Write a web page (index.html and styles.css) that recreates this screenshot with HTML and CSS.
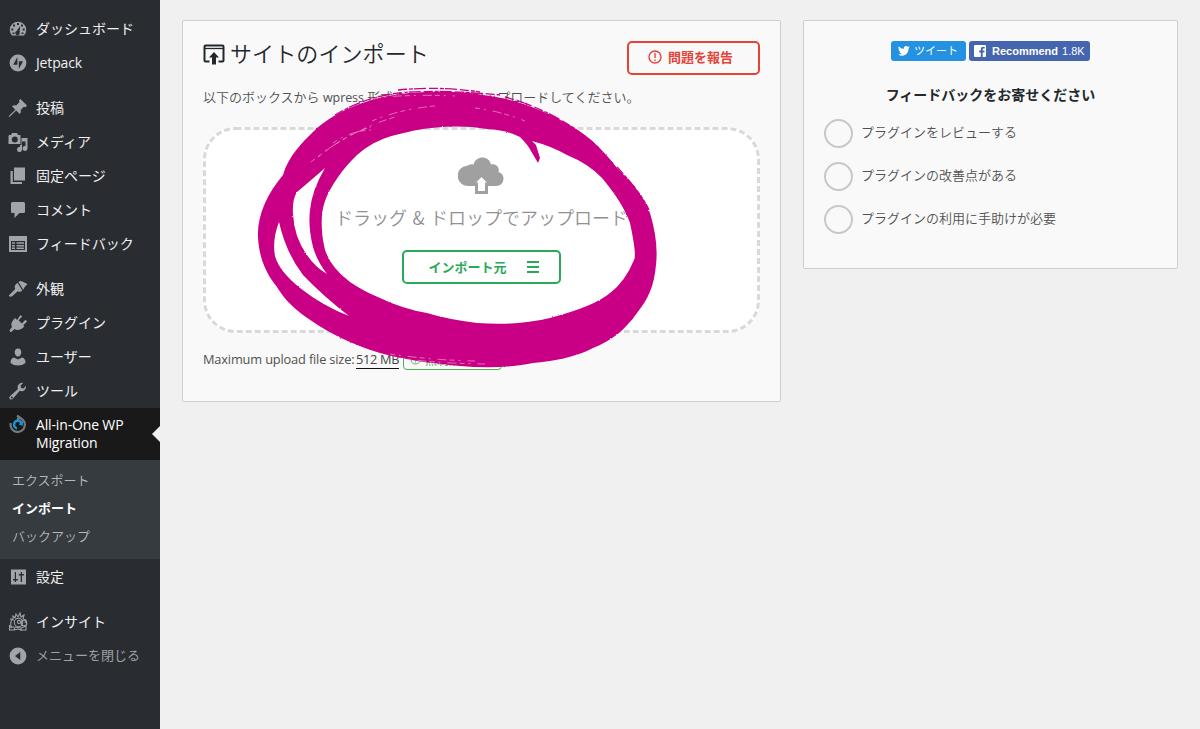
FILE: index.html
```html
<!DOCTYPE html>
<html lang="ja">
<head>
<meta charset="utf-8">
<title>サイトのインポート</title>
<link rel="stylesheet" href="styles.css">
</head>
<body>
<div class="app">
  <nav class="sidebar">
    <ul class="menu">
      <li class="item"><svg class="icon" viewBox="0 0 20 20"><path fill-rule="evenodd" d="M4 16.500A8.200 8.200 0 1 1 16 16.500ZM9 4v2h2V4ZM5 5.500v2h2v-2ZM13 5.500v2h2v-2ZM3.300 9.500v2h2v-2ZM14.700 9.500v2h2v-2ZM12.200 7 8.600 12a2.200 2.200 0 1 0 3 1.200ZM4.500 13.500v1.500h2v-1.500ZM13.500 13.500v1.500h2v-1.500Z"/></svg><span>ダッシュボード</span></li>
      <li class="item latin"><svg class="icon" viewBox="0 0 20 20"><path fill-rule="evenodd" d="M10 1.600a8.400 8.400 0 1 0 0 16.800 8.400 8.400 0 0 0 0-16.800ZM9.400 4v7.700H5.200ZM10.800 16V8.300H15Z"/></svg><span>Jetpack</span></li>
      <li class="item gap"><svg class="icon" viewBox="0 0 20 20"><path d="M12.500 1 19 7.500 17.600 9.200 15.900 8.700 12.600 12C13.300 13.600 12.800 15.200 11.700 16L8.200 12.600 2.200 18.300.6 19.200 1.300 17.500 7.300 11.700 4 8.300C5 7.200 6.700 6.900 8.100 7.500L11.400 4.200 10.900 2.600Z"/></svg><span>投稿</span></li>
      <li class="item"><svg class="icon" viewBox="0 0 20 20"><path fill-rule="evenodd" d="M1 3h2l1-2h5l1 2h2.500v9H.5V4Zm5.800 1.500a3 3 0 1 0 0 6 3 3 0 0 0 0-6ZM13.500 6H19.500v10.500a2.500 2.500 0 1 1-2-2.400V9.500H14v8a2.500 2.500 0 1 1-2-2.400V13h1.500Z"/></svg><span>メディア</span></li>
      <li class="item"><svg class="icon" viewBox="0 0 20 20"><path d="M6 1.500h11v13H6ZM2.500 5H4.800v11H14v2H2.500Z"/></svg><span>固定ページ</span></li>
      <li class="item"><svg class="icon" viewBox="0 0 20 20"><path d="M4.500 2h11Q17 2 17 3.500v8q0 1.500-1.500 1.500H11.500L6.500 18V13h-2Q3 13 3 11.500v-8Q3 2 4.500 2Z"/></svg><span>コメント</span></li>
      <li class="item"><svg class="icon" viewBox="0 0 20 20"><path fill-rule="evenodd" d="M1 2h18v16H1ZM3 7v9h14V7ZM4 8.300h3v1.500H4ZM8.500 8.300H16v1.500H8.500ZM4 11h3v1.500H4ZM8.500 11H16v1.500H8.500ZM4 13.600h3V15H4ZM8.500 13.600H16V15H8.500Z"/></svg><span>フィードバック</span></li>
      <li class="item gap"><svg class="icon" viewBox="0 0 20 20"><path d="M10.500 3Q12.500 1 14.300 2.600L19.500 5Q17 7.200 15.200 10.800ZM9.500 3.800 14.300 11.600Q12 13.800 9.700 12.200L4.500 17Q2 18.700.8 16.500L7.200 10Q5.500 6.500 9.500 3.800Z"/></svg><span>外観</span></li>
      <li class="item"><svg class="icon" viewBox="0 0 20 20"><path d="m12.500 1.900 1.700 1.700-3.600 3.600 3.200 3.200 3.600-3.600 1.700 1.700-3.800 3.800 1.100 1.100-1.200 1.200c-2 2-6 3.500-8.700 1.500L3.600 18.700Q1.900 19.600 1.500 17.300L4 14C2.500 11 4 8.300 6 6.200L7.100 5l2 1.900Z"/></svg><span>プラグイン</span></li>
      <li class="item"><svg class="icon" viewBox="0 0 20 20"><path d="M10 1.500c2.100 0 3.300 1.600 3.300 3.700S12 9.500 10 9.500 6.700 7.300 6.700 5.200 7.900 1.500 10 1.500ZM6 10.500l4 2 4-2q3.500.5 3.500 5.500-3 2.500-7.500 2.500T2.500 16q0-5 3.500-5.500Z"/></svg><span>ユーザー</span></li>
      <li class="item"><svg class="icon" viewBox="0 0 20 20"><path fill-rule="evenodd" d="M16.700 8.900C15.400 10.200 13.400 10.500 11.800 9.800L5 17.600Q3.300 19.200 1.800 17.900T2.200 15L10 8.100C9.300 6.500 9.600 4.600 10.900 3.300A5 5 0 0 1 15.100 1.900L12.600 4.500 13 7l2.500.4L18.100 4.800A5 5 0 0 1 16.700 8.900ZM3.800 15.400a1 1 0 1 0 0 2 1 1 0 0 0 0-2Z"/></svg><span>ツール</span></li>
      <li class="item current latin"><svg class="icon" viewBox="0 0 20 20"><path class="ring" d="M9.500 2.600A7.200 7.200 0 1 1 2.700 8"/><path class="ring" d="M9 .5 12 2.700 9 5"/><path class="swirl" d="M13.800 8.500A4 4 0 1 0 9 13.500"/><path class="swirl-tip" d="m15 6-.3 5-4.200-1.800Z"/></svg><span>All-in-One WP<br>Migration</span></li>
    </ul>
    <ul class="submenu"><li>エクスポート</li><li class="selected">インポート</li><li>バックアップ</li></ul>
    <ul class="menu">
      <li class="item"><svg class="icon" viewBox="0 0 20 20"><path fill-rule="evenodd" d="M3 2.500h15v15H3ZM6.800 5v7H5v1.500H6.800V15H8v-1.500h1.800V12H8V5ZM12.700 5v2h-1.900v1.500h1.900V15H14V8.500h1.900V7H14V5Z"/></svg><span>設定</span></li>
      <li class="item gap"><svg class="icon outline" viewBox="0 0 20 20"><path d="M4 16C1 13 4 10 3 7l2 1V4l2 2 1-4 2 3 2-4 1 4 3-2-1 4 3 1-1 3"/><circle cx="10.500" cy="10.500" r="4.200"/><circle cx="16" cy="11" r="2.800"/><circle cx="11" cy="10" r="1.600"/><path d="M1.500 13v5H6l1-3 6 1 5-2v4h-5l-3-1-4 1M2 15h4M13 16v3"/></svg><span>インサイト</span></li>
      <li class="item collapse"><svg class="icon" viewBox="0 0 20 20"><path fill-rule="evenodd" d="M10 1.600a8.400 8.400 0 1 0 0 16.800 8.400 8.400 0 0 0 0-16.800ZM12.300 6v8L7 10Z"/></svg><span>メニューを閉じる</span></li>
    </ul>
  </nav>
  <main class="content">
    <section class="card import">
      <header class="head">
        <h1><svg class="title-icon" viewBox="0 0 22 21"><path d="M6.500 17.500H2.500q-1 0-1-1v-14q0-1 1-1h17q1 0 1 1v14q0 1-1 1H15.500" fill="none" stroke="currentColor" stroke-width="2"/><path d="M2 4.500h18" fill="none" stroke="currentColor" stroke-width="1.300"/><path d="M11 8 16 13.500H13v7H9v-7H6Z"/></svg><span>サイトのインポート</span></h1>
        <div class="btn report"><svg viewBox="0 0 14 14"><circle cx="7" cy="7" r="6"/><path d="M7 3v5M7 9.500v1.500"/></svg><span>問題を報告</span></div>
      </header>
      <p class="lead">以下のボックスから <span class="wp">wpress</span> 形式のファイルをアップロードしてください。</p>
      <div class="drop">
        <svg class="dash" viewBox="0 0 557 206"><rect x="1.500" y="1.500" width="554" height="203" rx="31"/></svg>
        <svg class="cloud" viewBox="0 0 47 38"><path d="M11 29A10.200 10.200 0 1 1 9 8.700Q12 6.500 15.500 7.500C18-2 31-2 33 7.500c5-1 9 3 7.500 7.500A7.200 7.200 0 0 1 39 29Z"/><path class="arrow" d="M23.500 18 32.500 27H28.500v8.500H18.500V27H14.500Z"/></svg>
        <div class="drop-text">ドラッグ &amp; ドロップでアップロード</div>
        <div class="btn source"><span>インポート元</span><svg viewBox="0 0 12 12"><path d="M0 1h12M0 6h12M0 11h12"/></svg></div>
      </div>
      <div class="limit"><span class="max">Maximum upload file size:</span><span class="size">512 MB</span><span class="unlimited"><svg viewBox="0 0 12 12"><circle cx="6" cy="6" r="5"/><path d="M6 3v4M6 8v1.500"/></svg>無制限の入手</span></div>
      <svg class="brush" viewBox="250 80 420 300">
        <defs><filter id="rough" x="-5%" y="-5%" width="110%" height="110%"><feTurbulence type="fractalNoise" baseFrequency=".5" numOctaves="2" seed="4"/><feDisplacementMap in="SourceGraphic" scale="2" xChannelSelector="R" yChannelSelector="G"/></filter></defs>
        <g filter="url(#rough)">
        <path class="paint" fill-rule="evenodd" d="M258 237C257 216 267 194 283 175C289 155 302 143 313 132C332 113 361 102 383 97C410 91 458 90 483 95C518 99 548 112 573 127C591 138 605 152 617 168C630 181 643 194 650 213C655 230 658 247 656 265C654 287 648 299 637 313C624 331 611 341 593 348C574 358 553 361 533 363C507 368 484 368 460 366C432 363 409 361 380 353C350 344 325 331 303 315C291 306 283 297 277 287C264 271 259 255 258 237Z
        M323 240C321 225 321 212 325 201C330 187 343 168 357 155C376 139 389 136 417 130C439 126 465 125 487 129Q507 130 520 137Q528 145 531 151L538 163L540 158L536 145L532 141Q551 146 567 155Q589 164 602 178Q623 203 630 223Q637 256 634 260Q625 282 610 293Q595 306 550 318Q517 326 477 323Q446 319 427 313Q403 309 380 298Q363 291 350 282Q331 268 325 250Z
        M325 168Q309 182 297 192Q292 200 293 214Q294 237 307 255Q315 267 327 274Q317 261 313 247Q308 227 310 210Q312 190 325 168Z
        M279 222Q272 240 275 256Q279 271 300 288Q323 306 349 316Q323 296 303 275Q286 253 279 222Z"/>
        <g class="fringe"><path d="M285 172Q301 135 345 111"/><path d="M335 115Q370 94 410 92T500 95"/><path d="M398 90Q440 86 480 92"/><path d="M505 97Q560 112 600 149"/><path d="M617 167Q642 194 649 210"/></g>
        <g class="bristle"><path d="M311 162Q350 130 398 116"/><path d="M318 157Q345 135 371 127"/><path d="M333 143Q350 131 371 130"/><path d="M372 121Q400 109 435 106"/><path d="M475 108Q500 111 525 121"/><path d="M390 354Q430 360 475 361"/><path d="M400 358Q430 363 485 364"/><path d="M375 98Q410 94 455 96"/></g>
        </g>
      </svg>
    </section>
    <aside class="card feedback">
      <div class="social"><div class="tweet"><svg viewBox="0 0 24 20"><path d="M23.500 2.400q-1.200.6-2.700.8 1.500-1 2.100-2.600-1.400.8-3 1.200A4.800 4.800 0 0 0 11.600 6Q5.900 5.800 1.700.9A4.800 4.800 0 0 0 3.200 7.300Q2 7.200 1 6.600 1 10.500 4.900 11.500 4 11.800 2.700 11.600 3.600 14.600 7.200 15 4.200 17.300.2 17C11 23.500 21.300 16.500 21.100 4.900Q22.500 3.900 23.500 2.400Z"/></svg><span>ツイート</span></div><div class="recommend"><svg viewBox="0 0 12 12"><path fill-rule="evenodd" d="M1 0h10q1 0 1 1v10q0 1-1 1H8.700V7.400h1.600l.3-1.800H8.700V4.400q0-.9 1-.9h1V1.900Q6.800 1.200 6.800 4.100v1.500H5.200v1.800h1.600V12H1q-1 0-1-1V1q0-1 1-1Z"/></svg><b>Recommend</b><span>1.8K</span></div></div>
      <h2>フィードバックをお寄せください</h2>
      <ul class="choices"><li><i></i><span>プラグインをレビューする</span></li><li><i></i><span>プラグインの改善点がある</span></li><li><i></i><span>プラグインの利用に手助けが必要</span></li></ul>
    </aside>
  </main>
</div>
</body>
</html>
```
FILE: styles.css
```css
* { box-sizing: border-box; }
body { margin: 0; background: #f0f0f0; font-family: "Open Sans", "Noto Sans CJK JP", sans-serif; font-size: 13px; color: #505050; }
ul { list-style: none; margin: 0; padding: 0; }
svg { display: block; flex: none; }
.app { display: flex; height: 729px; overflow: hidden; }
.sidebar { width: 160px; flex: none; background: #292c31; padding-top: 11px; }
.item { display: flex; align-items: center; height: 34px; color: #f0f0f0; font: 14px/18px "Noto Sans CJK JP", sans-serif; }
.item span { margin-top: -1px; }
.item.gap { margin-top: 11px; }
.item.latin { font-family: "Open Sans", sans-serif; font-size: 14px; letter-spacing: -.15px; }
.item.latin span { margin-top: 1px; }
.item .icon { width: 20px; height: 20px; margin: 1px 8px 0; fill: #a0a5aa; }
.item .outline { fill: none; stroke: #a0a5aa; stroke-width: 1.1; }
.item.current { position: relative; height: 52px; margin-top: 1px; background: #191919; color: #fff; align-items: flex-start; padding-top: 8px; }
.item.current span { margin-top: 0; }
.item.current .icon { margin-top: -1px; }
.item.current::after { content: ""; position: absolute; right: 0; top: 18px; border: 8px solid transparent; border-right-color: #f0f0f0; border-left: 0; }
.ring { fill: none; stroke: #777a7d; stroke-width: 2.2; }
.swirl { fill: none; stroke: #1c91d0; stroke-width: 2.6; }
.swirl-tip { fill: #1c91d0; }
.item.collapse { color: #9ea2a6; font-size: 13px; }
.submenu { height: 99px; background: #363b3f; padding: 6px 12px; font: 13px/28px "Noto Sans CJK JP", sans-serif; color: #b4b9be; font-weight: 350; }
.submenu .selected { color: #fff; font-weight: 700; }
.content { display: flex; align-items: flex-start; gap: 22px; padding: 20px 22px; }
.card { position: relative; background: #f9f9f9; border: 1px solid #cfcfcf; border-radius: 2px; padding: 20px; }
.import { width: 599px; height: 382px; }
.head { display: flex; justify-content: space-between; height: 34px; }
h1 { display: flex; align-items: center; gap: 5px; margin: 0; height: 26px; font: 350 22px/26px "Noto Sans CJK JP", sans-serif; color: #23282d; }
h1 span { margin-top: -4px; letter-spacing: .1px; }
.title-icon { width: 22px; height: 21px; fill: #23282d; color: #23282d; }
.btn { display: flex; align-items: center; justify-content: center; height: 34px; border: 2px solid; border-radius: 5px; font: 700 13px/18px "Noto Sans CJK JP", sans-serif; }
.report { width: 133px; gap: 6px; color: #e74237; padding: 0 6px 3px 0; }
.report svg { width: 14px; height: 14px; fill: none; stroke: currentColor; stroke-width: 1.4; }
.lead { margin: 12px 0 0; height: 20px; font: 350 13px/20px "Noto Sans CJK JP", sans-serif; color: #505050; white-space: nowrap; }
.wp { font-family: "Open Sans", sans-serif; font-size: 12.5px; letter-spacing: -.1px; font-weight: 400; margin: 0 .5px; }
.drop { position: relative; display: flex; flex-direction: column; align-items: center; width: 557px; height: 206px; margin-top: 20px; padding-top: 30px; border-radius: 32px; background: #fff; }
.dash { position: absolute; inset: 0; width: 557px; height: 206px; fill: none; stroke: #d9d9d9; stroke-width: 3; stroke-dasharray: 6 3; }
.cloud { width: 47px; height: 38px; fill: #a0a0a0; }
.arrow { fill: #fff; stroke: #a0a0a0; stroke-width: 3; }
.drop-text { margin-top: 9px; font: 350 18px/26px "Noto Sans CJK JP", sans-serif; color: #909090; white-space: nowrap; word-spacing: 1.5px; }
.source { width: 159px; margin-top: 20px; gap: 20px; color: #28aa59; padding: 0 0 1px 4px; }
.source svg { width: 12px; height: 12px; stroke: currentColor; stroke-width: 2; margin-top: 1px; }
.limit { display: flex; align-items: center; height: 22px; margin-top: 15px; font-size: 12.8px; letter-spacing: -.16px; white-space: nowrap; }
.max { width: 153px; }
.size { width: 43px; line-height: 17px; border-bottom: 1px solid #111; color: #444; letter-spacing: -.3px; margin-top: 1px; }
.unlimited { display: flex; align-items: center; gap: 4px; width: 99px; height: 22px; margin-left: 4px; padding-left: 6px; border: 1px solid #4caf50; border-radius: 4px; color: #4caf50; font: 12px "Noto Sans CJK JP", sans-serif; }
.unlimited svg { width: 11px; height: 11px; fill: none; stroke: currentColor; }
/* Hand-painted ring laid over the import panel */
.brush { position: absolute; left: 67px; top: 59px; width: 420px; height: 300px; pointer-events: none; }
.paint { fill: #c90585; }
.fringe { fill: none; stroke: #c90585; stroke-width: 1.3; stroke-dasharray: 9 2 4 1 12 3; }
.bristle { fill: none; stroke: #efb2d7; stroke-width: .6; stroke-dasharray: 5 4 2 7 9 3; }
.feedback { width: 375px; height: 249px; }
.social { display: flex; justify-content: center; gap: 3px; height: 20px; }
.tweet, .recommend { display: flex; align-items: center; height: 20px; border-radius: 3px; color: #fff; font: 11px/18px "Liberation Sans", "Noto Sans CJK JP", sans-serif; }
.tweet { width: 75px; padding-left: 7px; gap: 4px; background: #2492e0; white-space: nowrap; }
.tweet svg { width: 12px; height: 10px; fill: #fff; }
.recommend { width: 121px; padding-left: 5px; background: #4565ae; }
.recommend svg { width: 12px; height: 12px; fill: #fff; margin-right: 6px; }
.recommend b { margin-right: 4px; }
h2 { margin: 23px 0 0; font: 700 14px/20px "Noto Sans CJK JP", sans-serif; color: #23282d; text-align: center; }
.choices { display: grid; gap: 14px; margin-top: 15px; }
.choices li { display: flex; gap: 8px; height: 29px; font: 350 13px/26px "Noto Sans CJK JP", sans-serif; color: #505050; }
.choices i { width: 29px; height: 29px; border: 2px solid #c8c8c8; border-radius: 50%; }
```
